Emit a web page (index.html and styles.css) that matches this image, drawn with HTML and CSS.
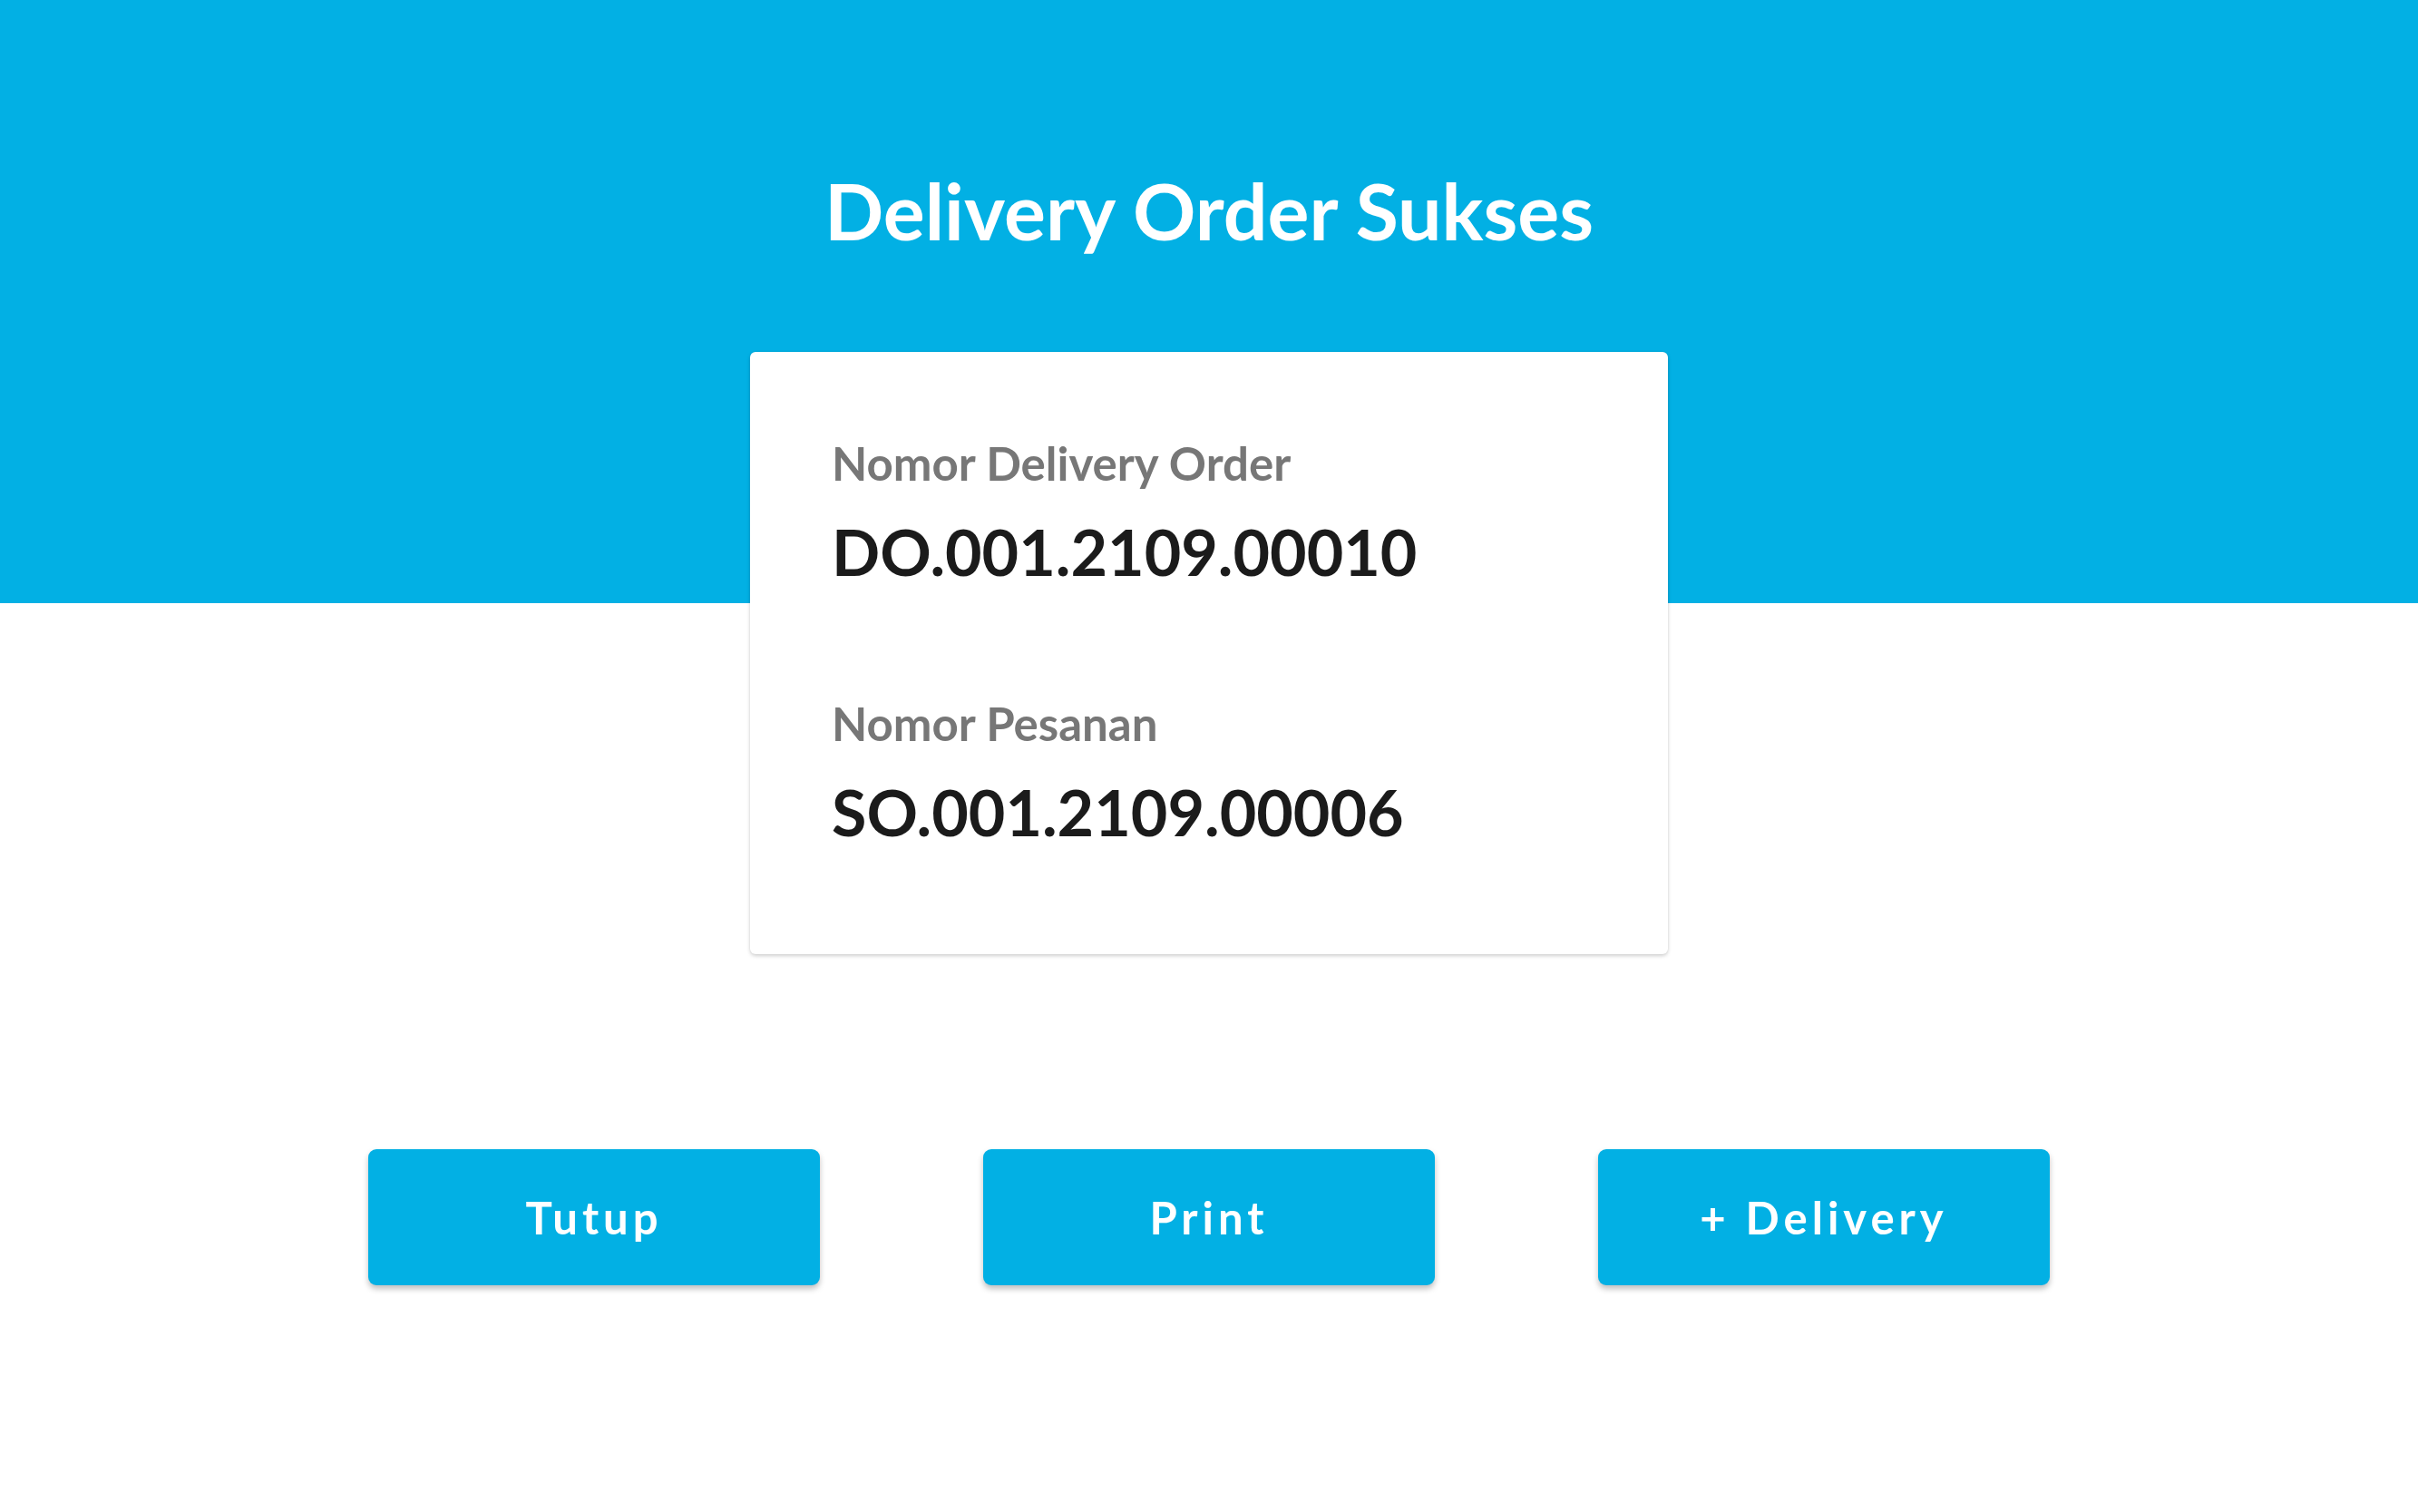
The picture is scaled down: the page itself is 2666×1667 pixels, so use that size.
FILE: index.html
```html
<!DOCTYPE html>
<html lang="id">
<head>
<meta charset="utf-8">
<title>Delivery Order Sukses</title>
<link rel="stylesheet" href="styles.css">
</head>
<body>
<main class="page">
  <h1 class="title">Delivery Order Sukses</h1>
  <section class="card">
    <div class="field">
      <div class="label">Nomor Delivery Order</div>
      <div class="value">DO.001.2109.00010</div>
    </div>
    <div class="field">
      <div class="label">Nomor Pesanan</div>
      <div class="value">SO.001.2109.00006</div>
    </div>
  </section>
  <div class="actions">
    <button class="btn">Tutup</button>
    <button class="btn">Print</button>
    <button class="btn">+ Delivery</button>
  </div>
</main>
</body>
</html>
```
FILE: styles.css
```css
html, body {
  margin: 0;
  padding: 0;
}
body {
  font-family: Lato, "Open Sans", sans-serif;
  background: linear-gradient(to bottom, #02b0e4 0, #02b0e4 665px, #ffffff 665px);
  min-height: 100vh;
}
.page {
  display: flex;
  flex-direction: column;
  align-items: center;
}
.title {
  margin: 189px 0 0;
  font-size: 86px;
  line-height: 1;
  font-weight: 700;
  color: #ffffff;
  text-align: center;
}
.card {
  box-sizing: border-box;
  width: 1012px;
  height: 664px;
  margin-top: 113px;
  background: #ffffff;
  border-radius: 6px;
  box-shadow: 0 2px 4px rgba(0,0,0,0.18), 0 0 2px rgba(0,0,0,0.08);
  padding: 97px 90px 0;
  display: flex;
  flex-direction: column;
  gap: 129px;
}
.field {
  display: flex;
  flex-direction: column;
  gap: 37px;
}
.label {
  font-size: 51px;
  line-height: 1;
  font-weight: 700;
  color: #777777;
}
.value {
  font-size: 70px;
  line-height: 1;
  font-weight: 700;
  color: #1b1b1b;
}
.actions {
  margin-top: 215px;
  display: flex;
  gap: 180px;
}
.btn {
  width: 498px;
  height: 150px;
  border: none;
  border-radius: 9px;
  background: #02b0e4;
  color: #ffffff;
  font-family: Lato, "Open Sans", sans-serif;
  font-size: 49px;
  font-weight: 700;
  letter-spacing: 5px;
  box-shadow: 0 4px 6px rgba(0,0,0,0.25);
  cursor: pointer;
}
```
